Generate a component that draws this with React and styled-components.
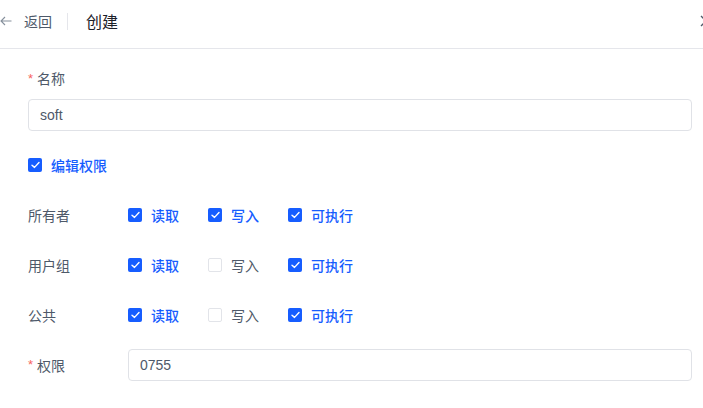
import React from "react";
import styled, { createGlobalStyle } from "styled-components";

const Global = createGlobalStyle`
  html, body { margin: 0; padding: 0; background: #fff; }
  body { font-family: "Liberation Sans", "Noto Sans CJK SC", sans-serif; }
  * { box-sizing: border-box; }
`;

const Viewport = styled.div`
  width: 703px;
  height: 408px;
  overflow: hidden;
  background: #fff;
`;

const Drawer = styled.div`
  width: 720px;
  display: flex;
  flex-direction: column;
`;

const Header = styled.div`
  height: 49px;
  border-bottom: 1px solid #e5e6eb;
  display: flex;
  align-items: center;
  padding: 0 8px 6px 0;
`;

const Back = styled.div`
  display: flex;
  align-items: center;
  gap: 12px;
  color: #4e5969;
  font-size: 14px;
`;

const Divider = styled.span`
  width: 1px;
  height: 17px;
  background: #e5e6eb;
  margin: 0 18px 0 15px;
`;

const Title = styled.div`
  flex: 1;
  font-size: 16px;
  color: #1d2129;
`;

const Close = styled.div`
  width: 12px;
  height: 12px;
  display: flex;
`;

const Body = styled.div`
  padding: 19px 28px 0 28px;
  display: flex;
  flex-direction: column;
`;

const VLabel = styled.div`
  height: 22px;
  line-height: 22px;
  font-size: 14px;
  color: #4e5969;
  margin-bottom: 9px;
  display: flex;
  align-items: center;
`;

const Star = styled.span`
  color: #f76560;
  font-size: 13px;
  margin-right: 4px;
  line-height: 1;
  position: relative;
  top: -1px;
`;

const Input = styled.div`
  height: 32px;
  flex: ${(p) => (p.$grow ? "1" : "none")};
  border: 1px solid #e0e2e7;
  border-radius: 4px;
  padding: 0 11px;
  display: flex;
  align-items: center;
  font-size: 14px;
  color: #4e5969;
`;

const ToggleRow = styled.div`
  height: 28px;
  margin-top: 20px;
  margin-bottom: 20px;
  display: flex;
  align-items: center;
`;

const Row = styled.div`
  height: 32px;
  margin-bottom: 18px;
  display: flex;
  align-items: center;
`;

const RowLabel = styled.div`
  width: 100px;
  font-size: 14px;
  color: #4e5969;
  display: flex;
  align-items: center;
`;

const Options = styled.div`
  display: grid;
  grid-template-columns: repeat(3, 80px);
`;

const Check = styled.label`
  display: flex;
  align-items: center;
  gap: 9px;
  font-size: 14px;
  color: ${(p) => (p.$checked ? "#165dff" : "#4e5969")};
  font-weight: ${(p) => (p.$checked ? 500 : 400)};
`;

const Box = styled.span`
  width: 14px;
  height: 14px;
  border-radius: 2px;
  display: flex;
  align-items: center;
  justify-content: center;
  background: ${(p) => (p.$checked ? "#165dff" : "#fff")};
  border: ${(p) => (p.$checked ? "none" : "1.5px solid #e2e4e9")};
`;

const CheckBox = ({ checked, children }) => (
  <Check $checked={checked}>
    <Box $checked={checked}>
      {checked && (
        <svg width="9" height="8" viewBox="0 0 9 8">
          <path d="M1 4.2 L3.5 6.4 L8 1.5" fill="none" stroke="#fff" strokeWidth="1.4" strokeLinecap="round" strokeLinejoin="round" />
        </svg>
      )}
    </Box>
    {children}
  </Check>
);

const rows = [
  { name: "所有者", perms: [true, true, true] },
  { name: "用户组", perms: [true, false, true] },
  { name: "公共", perms: [true, false, true] },
];
const permNames = ["读取", "写入", "可执行"];

export default function App() {
  return (
    <Viewport>
      <Global />
      <Drawer>
        <Header>
          <Back>
            <svg width="12" height="10" viewBox="0 0 12 10">
              <path d="M11.5 5 H1 M5 1 L1 5 L5 9" fill="none" stroke="#86909c" strokeWidth="1.1" />
            </svg>
            <span>返回</span>
          </Back>
          <Divider />
          <Title>创建</Title>
          <Close>
            <svg width="12" height="12" viewBox="0 0 12 12">
              <path d="M1 1 L11 11 M11 1 L1 11" stroke="#4e5969" strokeWidth="1.3" />
            </svg>
          </Close>
        </Header>
        <Body>
          <VLabel>
            <Star>*</Star>名称
          </VLabel>
          <Input>soft</Input>
          <ToggleRow>
            <CheckBox checked>编辑权限</CheckBox>
          </ToggleRow>
          {rows.map((r) => (
            <Row key={r.name}>
              <RowLabel>{r.name}</RowLabel>
              <Options>
                {r.perms.map((c, i) => (
                  <CheckBox key={i} checked={c}>
                    {permNames[i]}
                  </CheckBox>
                ))}
              </Options>
            </Row>
          ))}
          <Row>
            <RowLabel>
              <Star>*</Star>权限
            </RowLabel>
            <Input $grow>0755</Input>
          </Row>
        </Body>
      </Drawer>
    </Viewport>
  );
}
